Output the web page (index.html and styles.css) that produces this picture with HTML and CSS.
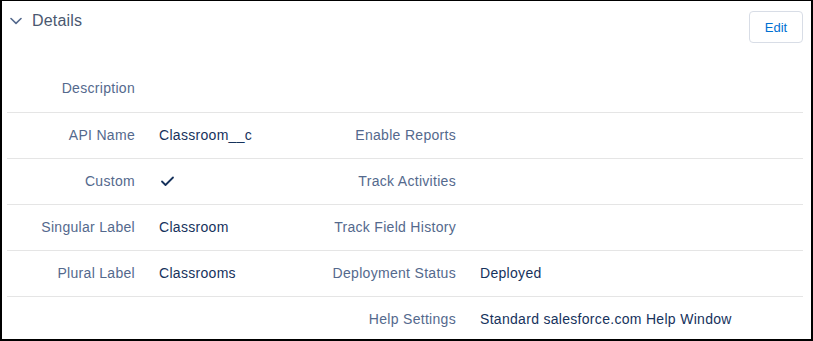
FILE: index.html
```html
<!DOCTYPE html>
<html>
<head>
<meta charset="utf-8">
<link rel="stylesheet" href="styles.css">
</head>
<body>
<div class="frame">
  <div class="header">
    <div class="title">
      <svg class="chevron" width="12" height="8" viewBox="0 0 12 8"><path d="M1 1.5 L6 6.3 L11 1.5" fill="none" stroke="#54698d" stroke-width="1.6" stroke-linecap="round" stroke-linejoin="round"/></svg>
      <span>Details</span>
    </div>
    <button class="edit">Edit</button>
  </div>
  <div class="rows">
    <div class="row first">
      <div class="label">Description</div><div class="value"></div>
      <div class="label"></div><div class="value"></div>
    </div>
    <div class="row">
      <div class="label">API Name</div><div class="value">Classroom__c</div>
      <div class="label">Enable Reports</div><div class="value"></div>
    </div>
    <div class="row">
      <div class="label">Custom</div><div class="value"><svg class="check" width="16" height="12" viewBox="0 0 16 12"><path d="M2 6.5 L5.5 10 L13 2.5" fill="none" stroke="#16325c" stroke-width="1.8" stroke-linecap="round" stroke-linejoin="round"/></svg></div>
      <div class="label">Track Activities</div><div class="value"></div>
    </div>
    <div class="row">
      <div class="label">Singular Label</div><div class="value">Classroom</div>
      <div class="label">Track Field History</div><div class="value"></div>
    </div>
    <div class="row">
      <div class="label">Plural Label</div><div class="value">Classrooms</div>
      <div class="label">Deployment Status</div><div class="value">Deployed</div>
    </div>
    <div class="row">
      <div class="label"></div><div class="value"></div>
      <div class="label">Help Settings</div><div class="value">Standard salesforce.com Help Window</div>
    </div>
  </div>
</div>
</body>
</html>
```
FILE: styles.css
```css
* { box-sizing: border-box; }
html, body { margin: 0; padding: 0; background: #fff; }
body { font-family: "Liberation Sans", Arial, sans-serif; }
.frame {
  width: 813px;
  height: 341px;
  border-style: solid;
  border-color: #000;
  border-width: 1px 2px 2px 2px;
  overflow: hidden;
  background: #fff;
}
.header {
  height: 65px;
  display: flex;
  justify-content: space-between;
  align-items: flex-start;
  padding: 0 8px 0 8px;
}
.title {
  display: flex;
  align-items: center;
  height: 39px;
  padding-bottom: 0;
  gap: 10px;
  color: #4a5870;
  font-size: 16px;
  letter-spacing: 0.2px;
}
.chevron { display: block; }
.edit {
  margin-top: 10px;
  width: 54px;
  height: 32px;
  background: #fff;
  border: 1px solid #d8dde6;
  border-radius: 4px;
  color: #0070d2;
  font-family: "Liberation Sans", Arial, sans-serif;
  font-size: 13px;
  padding: 0;
  cursor: pointer;
}
.rows { padding: 0 8px 0 5px; }
.row {
  display: grid;
  grid-template-columns: 128px 185px 136px 1fr;
  height: 46px;
  padding-bottom: 2px;
  align-items: center;
  border-top: 1px solid #e5e5e5;
  font-size: 14px;
  letter-spacing: 0.3px;
}
.row.first { border-top: none; height: 46px; }
.label { text-align: right; color: #54698d; }
.value { padding-left: 24px; color: #16325c; }
.check { display: block; margin-left: 1px; margin-top: 0; }
```
